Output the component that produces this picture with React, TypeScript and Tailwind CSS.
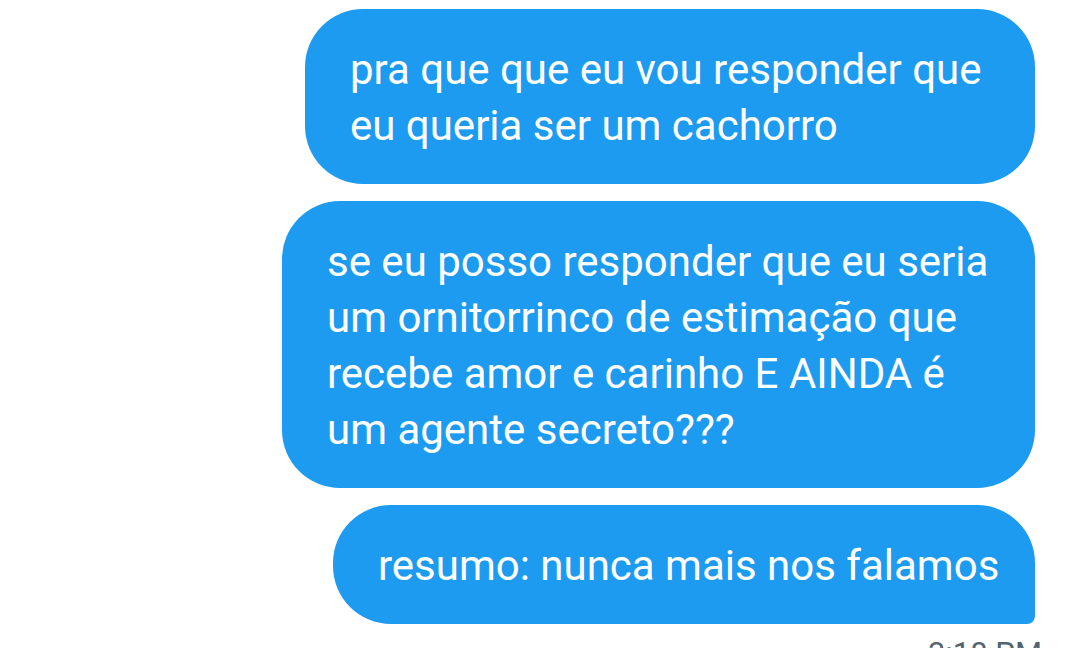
const messages = [
  {
    lines: ["pra que que eu vou responder que", "eu queria ser um cachorro"],
    width: "w-[730px]",
    corner: "rounded-[58px]",
  },
  {
    lines: [
      "se eu posso responder que eu seria",
      "um ornitorrinco de estimação que",
      "recebe amor e carinho E AINDA é",
      "um agente secreto???",
    ],
    width: "w-[753px]",
    corner: "rounded-[58px]",
  },
  {
    lines: ["resumo: nunca mais nos falamos"],
    width: "w-[702px]",
    corner: "rounded-[58px] rounded-br-[8px]",
  },
];

export default function App() {
  return (
    <div
      className="w-[1080px] h-[648px] overflow-hidden bg-white flex flex-col items-end pt-[9px] pr-[45px] gap-[17px]"
      style={{ fontFamily: "Roboto, 'Noto Sans', sans-serif" }}
    >
      {messages.map((m, i) => (
        <div
          key={i}
          className={`${m.width} ${m.corner} bg-[#1d9bf0] text-white text-[42px] leading-[56px] pl-[45px] pr-[20px] pt-[33px] pb-[30px]`}
        >
          {m.lines.map((line) => (
            <div key={line} className="whitespace-nowrap">
              {line}
            </div>
          ))}
        </div>
      ))}
      <div className="text-[31px] leading-[36px] text-[#536471] -mt-[5px] -mr-[7px] shrink-0">
        3:18 PM
      </div>
    </div>
  );
}
